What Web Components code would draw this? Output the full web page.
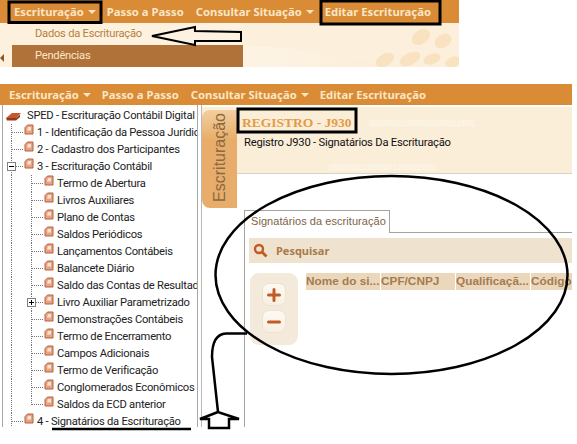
<!DOCTYPE html>
<html>
<head>
<meta charset="utf-8">
<style>
html,body{margin:0;padding:0;background:#fff;}
body{width:577px;height:444px;overflow:hidden;position:relative;font-family:Roboto,sans-serif;}
</style>
</head>
<body>
<sped-top>
    <sped-menubar slot="bar" pad="14">
        <sped-menu caret>Escrituração</sped-menu>
        <sped-menu style="margin-right:1px">Passo a Passo</sped-menu>
        <sped-menu caret>Consultar Situação</sped-menu>
        <sped-menu>Editar Escrituração</sped-menu>
    </sped-menubar>
</sped-top>
<sped-main>
    <sped-menubar slot="bar" pad="9">
        <sped-menu caret>Escrituração</sped-menu>
        <sped-menu style="margin-right:1px">Passo a Passo</sped-menu>
        <sped-menu caret>Consultar Situação</sped-menu>
        <sped-menu>Editar Escrituração</sped-menu>
    </sped-menubar>
    <sped-tree slot="tree">
        <sped-node root>SPED - Escrituração Contábil Digital</sped-node>
        <sped-node level="1">1 - Identificação da Pessoa Jurídica</sped-node>
        <sped-node level="1">2 - Cadastro dos Participantes</sped-node>
        <sped-node level="1" toggle="minus">3 - Escrituração Contábil</sped-node>
        <sped-node level="2">Termo de Abertura</sped-node>
        <sped-node level="2">Livros Auxiliares</sped-node>
        <sped-node level="2">Plano de Contas</sped-node>
        <sped-node level="2">Saldos Periódicos</sped-node>
        <sped-node level="2">Lançamentos Contábeis</sped-node>
        <sped-node level="2">Balancete Diário</sped-node>
        <sped-node level="2">Saldo das Contas de Resultado</sped-node>
        <sped-node level="2" toggle="plus">Livro Auxiliar Parametrizado</sped-node>
        <sped-node level="2">Demonstrações Contábeis</sped-node>
        <sped-node level="2">Termo de Encerramento</sped-node>
        <sped-node level="2">Campos Adicionais</sped-node>
        <sped-node level="2">Termo de Verificação</sped-node>
        <sped-node level="2">Conglomerados Econômicos</sped-node>
        <sped-node level="2" last>Saldos da ECD anterior</sped-node>
        <sped-node level="1">4 - Signatários da Escrituração</sped-node>
    </sped-tree>
    <sped-content slot="content"></sped-content>
</sped-main>
<sped-marks></sped-marks>

<script>
class SpedTop extends HTMLElement {
    constructor (){
        super();
        this.attachShadow({mode: 'open'}).innerHTML = `
            <style>
                :host{display:block;width:459px;height:67px;}
                .drop{height:44px;display:flex;background:linear-gradient(100deg,#fdf0dc 0%,#fdf3e3 60%,#fbe9cf 100%);}
                .edge{width:12px;flex:none;display:flex;align-items:flex-end;padding-bottom:5px;box-sizing:border-box;}
                .edge i{border:solid transparent;border-width:4px 4px 4px 0;border-right-color:#8a5a26;}
                .list{width:231px;flex:none;font:11.2px Roboto,sans-serif;letter-spacing:-.25px;}
                .list div{height:22px;line-height:22px;padding-left:23px;}
                .on{color:#b5813f;}
                .off{color:#fbe6c6;background:#b07238;}
                svg{flex:1;display:block;height:44px;}
            </style>
            <slot name="bar"></slot>
            <div class="drop">
                <div class="edge"><i></i></div>
                <div class="list">
                    <div class="on">Dados da Escrituração</div>
                    <div class="off">Pendências</div>
                </div>
                <svg viewBox="243 23 216 44" preserveAspectRatio="none">
                    <path d="M243 45 Q330 50 385 67 L459 67 L459 23 L243 23Z" fill="#fcf0dd"/>
                    <g fill="#f8e2bf">
                        <ellipse cx="421" cy="37" rx="10" ry="7" transform="rotate(-35 421 37)"/>
                        <ellipse cx="443" cy="41" rx="9" ry="6.5" transform="rotate(-30 443 41)"/>
                        <ellipse cx="385" cy="60" rx="10" ry="6" transform="rotate(-30 385 60)"/>
                        <ellipse cx="410" cy="59" rx="11" ry="6" transform="rotate(-25 410 59)"/>
                        <ellipse cx="432" cy="59" rx="9" ry="5" transform="rotate(-20 432 59)"/>
                        <ellipse cx="453" cy="62" rx="8" ry="5" transform="rotate(-20 453 62)"/>
                    </g>
                </svg>
            </div>
        `;
    }
}
customElements.define('sped-top',SpedTop);

class SpedMenubar extends HTMLElement {
    constructor (){
        super();
        this.attachShadow({mode: 'open'}).innerHTML = `
            <style>
                :host{display:flex;height:23px;align-items:center;background:#d98b36;gap:11px;box-sizing:border-box;}
            </style>
            <slot></slot>
        `;
    }
    connectedCallback(){
        this.style.paddingLeft=this.getAttribute('pad')+'px';
        if(this.getAttribute('pad')=='9') this.style.height='21px';
    }
}
customElements.define('sped-menubar',SpedMenubar);

class SpedMenu extends HTMLElement {
    constructor (){
        super();
        this.attachShadow({mode: 'open'}).innerHTML = `
            <style>
                :host{display:flex;align-items:center;gap:4px;color:#fbe6c6;font:bold 11.3px "Noto Sans",sans-serif;white-space:nowrap;}
                i{display:none;border:solid transparent;border-width:4px 4px 0;border-top-color:#fbe6c6;margin-top:1px;}
                :host([caret]) i{display:block;}
            </style>
            <slot></slot><i></i>
        `;
    }
}
customElements.define('sped-menu',SpedMenu);

class SpedMain extends HTMLElement {
    constructor (){
        super();
        this.attachShadow({mode: 'open'}).innerHTML = `
            <style>
                :host{display:block;width:572px;margin-top:17px;}
                .cols{display:flex;height:322px;overflow:hidden;}
            </style>
            <slot name="bar"></slot>
            <div class="cols">
                <slot name="tree"></slot>
                <slot name="content"></slot>
            </div>
        `;
    }
}
customElements.define('sped-main',SpedMain);

class SpedTree extends HTMLElement {
    constructor (){
        super();
        this.attachShadow({mode: 'open'}).innerHTML = `
            <style>
                :host{display:block;flex:none;width:196px;margin-left:2px;border:solid #a8a8a8;border-width:0 1px 0 1px;box-sizing:border-box;padding-top:2px;overflow:hidden;background:#fff;}
            </style>
            <slot></slot>
        `;
    }
}
customElements.define('sped-tree',SpedTree);

const bookIcon = `<svg width="10" height="11" viewBox="0 0 10 11"><path d="M1 3.5 L3.5 1 H9 V10 H1Z" fill="#e8a283" stroke="#b5623c"/><path d="M4 3 H7 V6.5 H3Z" fill="#f8e4d3"/></svg>`;
const rootIcon = `<svg width="15" height="9" viewBox="0 0 15 9"><path d="M0 6 L6 1 L15 1 L10 6Z" fill="#c8562a"/><path d="M0 6 L10 6 L14 2.5 V5 L10 8.5 H1Z" fill="#8f3a1c"/></svg>`;

class SpedNode extends HTMLElement {
    constructor (){
        super();
        this.attachShadow({mode: 'open'}).innerHTML = `
            <style>
                :host{display:flex;height:17px;align-items:center;font:11.2px Roboto,sans-serif;letter-spacing:-.25px;color:#222;white-space:nowrap;}
                .tee{flex:none;width:13px;height:17px;position:relative;}
                .line{position:absolute;left:0;top:0;bottom:0;border-left:1px dotted #777;}
                .dash{position:absolute;left:0;right:1px;top:8px;border-top:1px dotted #777;}
                .box{position:absolute;left:-4px;top:4px;width:7px;height:7px;border:1px solid #808080;background:#fff;z-index:1;}
                .box::before{content:"";position:absolute;left:1px;right:1px;top:3px;height:1px;background:#000;}
                .plus::after{content:"";position:absolute;top:1px;bottom:1px;left:3px;width:1px;background:#000;}
                svg{flex:none;display:block;}
                .root{margin-left:3px;}
            </style>
            <span id="pre" style="display:flex;flex:none;"></span><slot></slot>
        `;
    }
    connectedCallback(){
        const pre=this.shadowRoot.getElementById('pre');
        if(this.hasAttribute('root')){
            pre.innerHTML=`<span class="root" style="margin-right:6px;margin-top:1px">${rootIcon}</span>`;
            return;
        }
        const level=+this.getAttribute('level');
        const toggle=this.getAttribute('toggle');
        const last=this.hasAttribute('last');
        const box=toggle?`<span class="box ${toggle}"></span>`:'';
        let h='';
        h+=`<span style="width:8px;flex:none"></span>`;
        if(level==2) h+=`<span style="width:20px;height:17px;flex:none;position:relative;border-left:1px dotted #777;box-sizing:border-box"></span>`;
        const lineStyle=last?'bottom:8px':'';
        h+=`<span class="tee"><span class="line" style="${lineStyle}"></span><span class="dash"></span>${box}</span>`;
        h+=bookIcon+`<span style="width:3px;flex:none"></span>`;
        pre.innerHTML=h;
    }
}
customElements.define('sped-node',SpedNode);

class SpedContent extends HTMLElement {
    constructor (){
        super();
        this.attachShadow({mode: 'open'}).innerHTML = `
            <style>
                :host{display:block;flex:1;min-width:0;margin-left:3px;padding-top:2px;border-left:1px solid #b8b8b8;box-sizing:border-box;position:relative;}
                .head{display:flex;height:67px;background:#fbeed8;border-bottom:1px solid #d9d2c6;box-sizing:border-box;}
                .vtab{position:absolute;left:0;top:5px;width:35px;height:98px;background:linear-gradient(#f3cfa0,#e8ad6a 30%);border-radius:8px 0 0 8px;display:flex;align-items:center;justify-content:center;box-sizing:border-box;padding-bottom:4px;}
                .vtab span{writing-mode:vertical-rl;transform:rotate(180deg);font:16px "Liberation Sans",sans-serif;color:#8a6a42;}
                .txt{margin-left:40px;padding-top:8px;position:relative;}
                h1{margin:0;font:bold 13.5px "Liberation Serif",serif;color:#e39b48;line-height:16px;white-space:nowrap;}
                p{margin:5px 0 0 2px;font:11.2px Roboto,sans-serif;letter-spacing:-.2px;color:#111;white-space:nowrap;}
                .noise{position:absolute;font:9px "Liberation Mono",monospace;color:#fdf6ea;white-space:nowrap;letter-spacing:-1.6px;}
                .tabs{margin:36px 0 0 42px;height:23px;display:flex;border-left:1px solid #a9a49b;}
                .tab{width:145px;height:23px;border:1px solid #a9a49b;border-left:0;border-bottom:0;box-sizing:border-box;font:11px "Liberation Sans",sans-serif;letter-spacing:.06px;color:#7d6347;line-height:21px;padding-left:6px;white-space:nowrap;}
                .rule{flex:1;border-bottom:1px solid #a9a49b;}
                .body{margin-left:42px;border-left:1px solid #a9a49b;height:200px;padding:5px 0 0 4px;}
                .search{height:25px;background:#efe3d0;display:flex;align-items:center;gap:8px;padding-left:4px;font:bold 11px "Noto Sans",sans-serif;color:#a87b4b;}
                .search svg{display:block;}
                .row{display:flex;margin-top:10px;}
                .btns{width:48px;height:72px;background:#f4eadb;border-radius:9px;margin-left:1px;display:flex;flex-direction:column;align-items:center;gap:4px;padding-top:10px;box-sizing:border-box;}
                .btn{width:24px;height:23px;border-radius:7px;background:linear-gradient(#fdf9f3,#f8efe2);border:1px solid #eee2d0;box-sizing:border-box;display:flex;align-items:center;justify-content:center;}
                .grid{display:flex;margin-left:8px;height:17px;gap:1px;flex:1;min-width:0;}
                .grid div{flex:none;width:74px;background:#ebd7bc;font:bold 11.8px "Liberation Sans",sans-serif;line-height:17px;color:#a47c50;white-space:nowrap;}
                .grid div:last-child{flex:1;}
            </style>
            <div class="vtab"><span>Escrituração</span></div>
            <div class="head">
                <div class="txt">
                    <h1>REGISTRO - J930</h1>
                    <p>Registro J930 - Signatários Da Escrituração</p>
                    <span class="noise" style="left:126px;top:12px">1001001011100010101001110001</span>
                    <span class="noise" style="left:86px;top:56px">1001001011100010111001010011</span>
                </div>
            </div>
            <div class="tabs"><div class="tab">Signatários da escrituração</div><div class="rule"></div></div>
            <div class="body">
                <div class="search">
                    <svg width="15" height="15" viewBox="0 0 15 15"><circle cx="6" cy="6" r="4" fill="none" stroke="#c25a23" stroke-width="2.4"/><path d="M9 9 L13.5 13.5" stroke="#c25a23" stroke-width="2.8"/></svg>
                    <span>Pesquisar</span>
                </div>
                <div class="row">
                    <div class="btns">
                        <div class="btn"><svg width="14" height="14" viewBox="0 0 14 14"><path d="M7 1.5 V12.5 M1.5 7 H12.5" stroke="#c25a23" stroke-width="3" stroke-linecap="round"/></svg></div>
                        <div class="btn"><svg width="14" height="14" viewBox="0 0 14 14"><path d="M1.5 7 H12.5" stroke="#c25a23" stroke-width="3" stroke-linecap="round"/></svg></div>
                    </div>
                    <div class="grid">
                        <div>Nome do si...</div><div>CPF/CNPJ</div><div>Qualificaçã...</div><div>Código</div>
                    </div>
                </div>
            </div>
        `;
    }
}
customElements.define('sped-content',SpedContent);

// the hand drawn marks that lie over the screenshot
class SpedMarks extends HTMLElement {
    constructor (){
        super();
        this.attachShadow({mode: 'open'}).innerHTML = `
            <style>
                :host{position:absolute;left:0;top:0;width:577px;height:444px;pointer-events:none;}
                svg{display:block;}
            </style>
            <svg width="577" height="444" viewBox="0 0 577 444" fill="none" stroke="#000">
                <rect x="9" y="2" width="92" height="20.5" stroke-width="3"/>
                <rect x="321" y="1" width="119" height="23" stroke-width="3"/>
                <rect x="238" y="109" width="118" height="23" stroke-width="3"/>
                <path d="M152 36 L195 27 V31 L241 32 V41 L195 41 V45Z" stroke-width="2"/>
                <ellipse cx="391.5" cy="275" rx="176" ry="99" stroke-width="2.5"/>
                <path d="M247 333.5 H226 C216 334 212 342 212 357 L218 412" stroke-width="2.5"/>
                <path d="M218 412 L200 419 H209 V428 H229 V419 H239Z" stroke-width="2.5"/>
                <path d="M52 429 H191" stroke-width="2.5"/>
            </svg>
        `;
    }
}
customElements.define('sped-marks',SpedMarks);
</script>
</body>
</html>
